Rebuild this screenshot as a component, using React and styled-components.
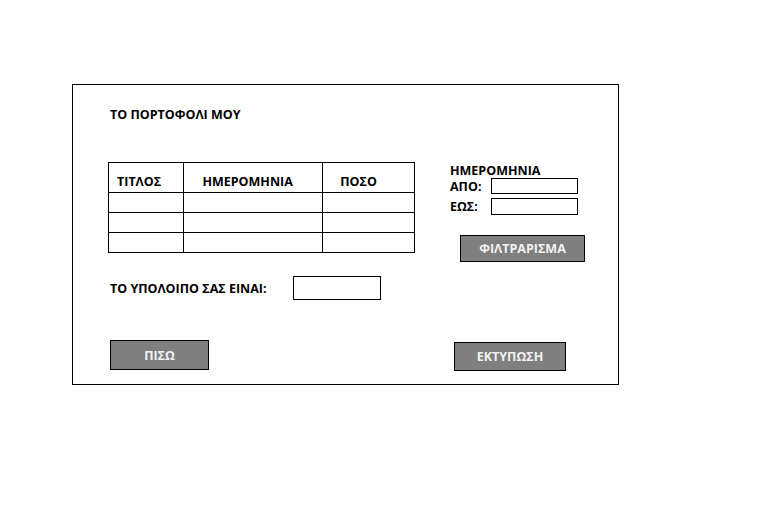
import React from 'react';
import styled, { createGlobalStyle } from 'styled-components';

const GlobalStyle = createGlobalStyle`
  body {
    margin: 0;
    background: #fff;
    font-family: 'Open Sans', 'Liberation Sans', sans-serif;
  }
`;

const Frame = styled.div`
  box-sizing: border-box;
  margin: 84px 0 0 72px;
  width: 547px;
  height: 301px;
  border: 1px solid #000;
  padding: 22px 0 0 35px;
  color: #000;
  font-weight: 700;
  font-size: 12.5px;
  line-height: 15px;
`;

const Title = styled.div`
  margin-left: 2px;
`;

const Main = styled.div`
  display: flex;
  align-items: flex-start;
  margin-top: 40px;
`;

const Table = styled.table`
  border-collapse: collapse;
  width: 307px;
`;

const Cell = styled.td`
  border: 1px solid #000;
  padding: 0 0 0 ${props => props.pad || 8}px;
  height: ${props => (props.head ? 26 : 19)}px;
  width: ${props => props.w}px;
  vertical-align: bottom;
  padding-bottom: ${props => (props.head ? 3 : 0)}px;
`;

const Filter = styled.div`
  display: flex;
  flex-direction: column;
  margin-left: 35px;
  margin-top: 1px;
`;

const FieldRow = styled.div`
  display: flex;
  align-items: center;
  margin-top: ${props => props.top}px;
`;

const Label = styled.span`
  width: 41px;
`;

const Box = styled.div`
  box-sizing: border-box;
  width: ${props => props.w}px;
  height: ${props => props.h}px;
  border: 1px solid #000;
`;

const Button = styled.div`
  box-sizing: border-box;
  display: flex;
  align-items: center;
  justify-content: center;
  width: ${props => props.w}px;
  height: ${props => props.h}px;
  background: #7f7f7f;
  border: 1px solid #000;
  color: #f2f2f2;
`;

const Balance = styled.div`
  display: flex;
  align-items: center;
  margin-top: 14px;
  margin-left: 2px;
`;

const BalanceLabel = styled.span`
  width: 183px;
`;

const Actions = styled.div`
  display: flex;
  align-items: flex-start;
  margin-top: 40px;
  margin-left: 2px;
`;

const FilterButton = styled(Button)`
  margin: 20px 0 0 10px;
`;

const PrintButton = styled(Button)`
  margin: 2px 0 0 245px;
`;

const rows = [0, 1, 2];

export default function App() {
  return (
    <>
      <GlobalStyle />
      <Frame>
        <Title>ΤΟ ΠΟΡΤΟΦΟΛΙ ΜΟΥ</Title>
        <Main>
          <Table>
            <tbody>
              <tr>
                <Cell head w={78} pad={8}>ΤΙΤΛΟΣ</Cell>
                <Cell head w={135} pad={18}>ΗΜΕΡΟΜΗΝΙΑ</Cell>
                <Cell head w={93} pad={17}>ΠΟΣΟ</Cell>
              </tr>
              {rows.map(r => (
                <tr key={r}>
                  <Cell w={78} />
                  <Cell w={135} />
                  <Cell w={93} />
                </tr>
              ))}
            </tbody>
          </Table>
          <Filter>
            <span>ΗΜΕΡΟΜΗΝΙΑ</span>
            <FieldRow top={0}>
              <Label>ΑΠΟ:</Label>
              <Box w={87} h={16} />
            </FieldRow>
            <FieldRow top={4}>
              <Label>ΕΩΣ:</Label>
              <Box w={87} h={17} />
            </FieldRow>
            <FilterButton w={125} h={27}>ΦΙΛΤΡΑΡΙΣΜΑ</FilterButton>
          </Filter>
        </Main>
        <Balance>
          <BalanceLabel>ΤΟ ΥΠΟΛΟΙΠΟ ΣΑΣ ΕΙΝΑΙ:</BalanceLabel>
          <Box w={88} h={24} />
        </Balance>
        <Actions>
          <Button w={99} h={30}>ΠΙΣΩ</Button>
          <PrintButton w={112} h={29}>ΕΚΤΥΠΩΣΗ</PrintButton>
        </Actions>
      </Frame>
    </>
  );
}
